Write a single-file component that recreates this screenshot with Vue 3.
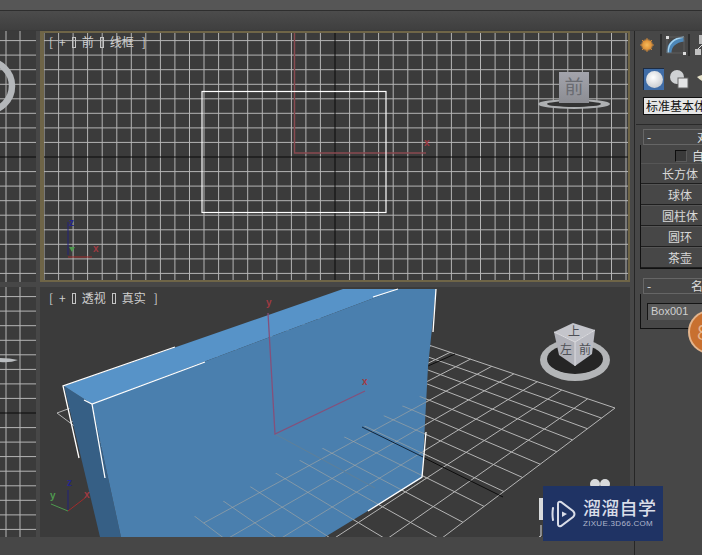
<script setup>
const step = 14.55

// lines of an orthographic grid around a centre point
const gridLines = (center, from, to) => {
  const out = []
  const first = Math.ceil((from - center) / step)
  const last = Math.floor((to - center) / step)
  for (let i = first; i <= last; i++) {
    if (i !== 0) out.push(+(center + i * step).toFixed(1))
  }
  return out
}

const frontXs = gridLines(335, 44, 630)
const frontYs = gridLines(157, 34, 281)
const sideXs = [6, 20]
const sideTopYs = gridLines(157, 34, 281)
const sideBottomYs = gridLines(413, 289, 537)

// floor grid of the perspective view: unit square mapped on a quad
const quad = [[331, 312], [615, 408], [333, 620], [57, 413]]
const project = (u, v) => {
  const [[x0, y0], [x1, y1], [x2, y2], [x3, y3]] = quad
  const dx = x0 - x1 + x2 - x3
  const dy = y0 - y1 + y2 - y3
  const dx1 = x1 - x2
  const dx2 = x3 - x2
  const dy1 = y1 - y2
  const dy2 = y3 - y2
  const den = dx1 * dy2 - dx2 * dy1
  const g = (dx * dy2 - dx2 * dy) / den
  const h = (dx1 * dy - dx * dy1) / den
  const w = g * u + h * v + 1
  return [
    (((x1 - x0 + g * x1) * u + (x3 - x0 + h * x3) * v + x0) / w).toFixed(1),
    (((y1 - y0 + g * y1) * u + (y3 - y0 + h * y3) * v + y0) / w).toFixed(1),
  ]
}

const floor = []
const cells = 14
for (let i = 0; i <= cells; i++) {
  const t = i / cells
  const a = project(t, 0)
  const b = project(t, 1)
  const c = project(0, t)
  const d = project(1, t)
  floor.push(`M${a[0]} ${a[1]}L${b[0]} ${b[1]}`)
  floor.push(`M${c[0]} ${c[1]}L${d[0]} ${d[1]}`)
}
const floorPath = floor.join('')

const shapes = ['长方体', '球体', '圆柱体', '圆环', '茶壶']
</script>

<template>
  <div class="app">
    <div class="menu-bar"></div>
    <div class="tool-bar"></div>
    <div class="workspace">
      <div class="viewports">
        <div class="viewport">
          <svg class="canvas" viewBox="0 31 36 251">
            <g class="grid">
              <path v-for="x in sideXs" :key="x" :d="`M${x} 31V282`" />
              <path v-for="y in sideTopYs" :key="y" :d="`M0 ${y}H36`" />
            </g>
            <path class="center-line" d="M0 157H36" />
            <circle cx="-13" cy="86" r="25" fill="none" stroke="#b4b7ba" stroke-width="6.500" />
          </svg>
        </div>

        <div class="viewport front">
          <svg class="canvas" viewBox="40 31 590 251">
            <defs>
              <linearGradient id="cube-face" x1="0" y1="0" x2="0" y2="1">
                <stop offset="0" stop-color="#a3a4ac" />
                <stop offset="1" stop-color="#8c8d93" />
              </linearGradient>
            </defs>
            <g class="grid">
              <path v-for="x in frontXs" :key="x" :d="`M${x} 31V282`" />
              <path v-for="y in frontYs" :key="y" :d="`M41 ${y}H631`" />
            </g>
            <path class="center-line" d="M41 157H631M335 31V282" />
            <path d="M294.500 31V153H426" fill="none" stroke="#8a4a50" stroke-width="1.400" />
            <text x="424" y="146" class="axis-label red">x</text>
            <rect x="202" y="91.500" width="184" height="121" fill="none" stroke="#fff" stroke-width="1.200" />
            <path d="M68 255V222" stroke="#22227a" fill="none" />
            <path d="M68 257H92" stroke="#a02c2c" fill="none" />
            <text x="69" y="226" class="axis-label blue">z</text>
            <text x="93" y="252" class="axis-label red">x</text>
            <path d="M69 247l3 5l3-5z" fill="#4f9a4f" />
            <!-- view cube -->
            <ellipse cx="574" cy="104" rx="36" ry="5" fill="#aeb0b2" />
            <ellipse cx="574" cy="104" rx="27" ry="3" fill="#333" />
            <rect x="559" y="72" width="30" height="31" fill="url(#cube-face)" />
            <text x="574" y="94" class="cube-text">前</text>
          </svg>
          <span class="vp-label"><b>[</b><b>+</b><i class="tofu"></i><b>前</b><i class="tofu"></i><b>线框</b><b class="close">]</b></span>
        </div>

        <div class="viewport">
          <svg class="canvas" viewBox="0 287 36 250">
            <g class="grid">
              <path v-for="x in sideXs" :key="x" :d="`M${x} 287V537`" />
              <path v-for="y in sideBottomYs" :key="y" :d="`M0 ${y}H36`" />
            </g>
            <path class="center-line" d="M0 413H36" />
            <path d="M0 358Q10 358 18 360Q10 363 0 362z" fill="#b9bcbf" />
          </svg>
        </div>

        <div class="viewport persp">
          <svg class="canvas" viewBox="40 287 590 250">
            <defs>
              <clipPath id="on-box">
                <path d="M150 540L430 391L430 478L325 537z" />
              </clipPath>
            </defs>
            <path :d="floorPath" class="floor" />
            <path d="M362 427L503 497M428 366L455 354" stroke="#0c0c0c" fill="none" />
            <!-- box -->
            <path d="M64 386L92 404L121 537H100z" fill="#365f85" />
            <path d="M64 386L343 289H398L92 404z" fill="#5793c8" />
            <path d="M92 404L398 289H436L428 367L422 478L325 537H121z" fill="#4a7fae" />
            <path :d="floorPath" class="floor on-box" clip-path="url(#on-box)" />
            <path d="M275 434L375 488" stroke="#5f7f99" fill="none" />
            <path d="M362 427L423 457" stroke="#10243a" fill="none" />
            <path
              d="M175 347L63 386L79 458M84 400L92 404L205 362M92 404L105 478M373 297L398 289M436 289L433 332M426 432L422 477L368 511"
              fill="none"
              stroke="#fff"
              stroke-width="1.300"
            />
            <!-- pivot -->
            <path d="M268 313L275 434L365 391" fill="none" stroke="#85507a" stroke-width="1.300" />
            <text x="266" y="306" class="axis-label red">y</text>
            <text x="362" y="385" class="axis-label red">x</text>
            <!-- tripod -->
            <path d="M68 511V490" stroke="#22227a" fill="none" />
            <path d="M68 511L85 498" stroke="#a02c2c" fill="none" />
            <path d="M68 511L51 504" stroke="#4f9a4f" fill="none" />
            <text x="67" y="486" class="axis-label blue">z</text>
            <text x="84" y="498" class="axis-label red">x</text>
            <text x="50" y="499" class="axis-label green">y</text>
            <!-- view cube -->
            <ellipse cx="575" cy="360" rx="35" ry="21" fill="#b3b5b7" />
            <ellipse cx="575" cy="359" rx="28" ry="15" fill="#252525" />
            <path d="M573 323L595 330L575 342L554 332z" fill="#c4c5cb" />
            <path d="M554 332L575 342V366L559 355z" fill="#b0b1b8" />
            <path d="M595 330L592 354L575 366V342z" fill="#babbc2" />
            <path d="M554 332L575 342L595 330M575 342V366" fill="none" stroke="#dcdce0" />
            <text x="566" y="354" class="cube-text small">左</text>
            <text x="585" y="354" class="cube-text small">前</text>
            <text x="574" y="336" class="cube-text small">上</text>
            <!-- object behind the logo -->
            <circle cx="595" cy="484" r="5" fill="#d8dadc" />
            <circle cx="605" cy="484" r="5" fill="#d8dadc" />
            <rect x="539" y="498" width="4" height="22" fill="#d8dadc" />
            <path d="M541 525V536L539 537" stroke="#d8dadc" fill="none" />
          </svg>
          <span class="vp-label"><b>[</b><b>+</b><i class="tofu"></i><b>透视</b><i class="tofu"></i><b>真实</b><b class="close">]</b></span>
        </div>
      </div>

      <aside class="panel">
        <div class="tabs">
          <svg width="20" height="20" viewBox="0 0 20 20">
            <defs>
              <radialGradient id="sun-glow">
                <stop offset="0" stop-color="#f7bb5b" />
                <stop offset="0.65" stop-color="#e2953a" />
                <stop offset="1" stop-color="#e2953a" stop-opacity="0" />
              </radialGradient>
            </defs>
            <g stroke="#c9843a" stroke-width="1">
              <path d="M10 3V17M3 10H17M5 5L15 15M15 5L5 15" />
            </g>
            <circle cx="10" cy="10" r="6.500" fill="url(#sun-glow)" />
          </svg>
          <svg width="30" height="22" viewBox="0 0 30 22">
            <path d="M1 0V22M29 0V22" stroke="#141414" />
            <path d="M9 19Q9 7 24 5" fill="none" stroke="#4d87b8" stroke-width="5" />
            <path d="M8 19Q8 5 24 3" fill="none" stroke="#a6d3ef" stroke-width="1.500" />
            <path d="M7 3H24V19H7z" fill="none" stroke="#5e5e5e" />
            <rect x="6" y="2" width="3" height="3" fill="#ddd" />
            <rect x="23" y="18" width="3" height="3" fill="#ddd" />
          </svg>
          <svg width="14" height="22" viewBox="0 0 14 22">
            <rect x="6" y="1" width="8" height="9" fill="#b9b9b9" />
            <rect x="2" y="15" width="6" height="6" fill="#c2c2c2" />
            <path d="M5 15L11 9" stroke="#ddd" />
          </svg>
        </div>
        <div class="tabs types">
          <span class="sphere-btn"><i class="sphere"></i></span>
          <svg width="20" height="20" viewBox="0 0 20 20">
            <circle cx="8" cy="8" r="7" fill="#cfd1d3" />
            <rect x="9" y="9" width="10" height="10" fill="#e4e5e6" stroke="#666" />
          </svg>
          <svg width="16" height="14" viewBox="0 0 16 14">
            <path d="M0 5Q8 1 16 3V13Q7 12 0 5z" fill="#e3dfc6" />
          </svg>
        </div>
        <div class="dropdown">标准基本体</div>

        <div class="rollouts">
          <div class="rollout">
            <div class="rollout-head"><span class="minus">-</span><span class="title">对象类型</span></div>
            <div class="rollout-body">
              <label class="check"><i class="box"></i>自动栅格</label>
              <button v-for="s in shapes" :key="s" class="shape">{{ s }}</button>
            </div>
          </div>
          <div class="rollout second">
            <div class="rollout-head"><span class="minus">-</span><span class="title">名称和颜色</span></div>
            <div class="rollout-body name">
              <div class="name-input">Box001</div>
            </div>
          </div>
          <span class="orange-badge">8</span>
        </div>
      </aside>
    </div>

    <div class="logo">
      <svg width="25" height="28" viewBox="0 0 25 28">
        <path d="M2 8Q1 14 2 20" fill="none" stroke="#d9dde8" stroke-width="2" stroke-linecap="round" />
        <path d="M7 4Q7 1 10 2L22 11Q25 14 22 17L10 26Q7 27 7 24z" fill="none" stroke="#d9dde8" stroke-width="2" />
        <path d="M11 11.500L16 14L11 17z" fill="#d9dde8" />
      </svg>
      <div class="logo-text">
        <strong>溜溜自学</strong>
        <small>ZIXUE.3D66.COM</small>
      </div>
    </div>
  </div>
</template>

<style scoped>
.app {
  position: relative;
  width: 702px;
  height: 555px;
  overflow: hidden;
  background: #474747;
  font-family: "Noto Sans CJK SC", "Liberation Sans", sans-serif;
}

.menu-bar {
  height: 10px;
  background: #565656;
  border-bottom: 1px solid #2e2e2e;
}

.tool-bar {
  height: 19px;
  background: linear-gradient(#4c4c4c, #3f3f3f);
}

.workspace {
  display: flex;
  height: 525px;
  border-top: 1px solid #3a3a3a;
}

.viewports {
  display: grid;
  grid-template-columns: 36px 590px;
  grid-template-rows: 251px 250px;
  column-gap: 4px;
  row-gap: 5px;
  width: 634px;
  flex: none;
}

.viewport {
  position: relative;
  background: #3b3b3b;
  overflow: hidden;
}

.front::after {
  content: "";
  position: absolute;
  inset: 0;
  border: solid #6f6547;
  border-width: 2px 2px 2px 4px;
}

.canvas {
  display: block;
  width: 100%;
  height: 100%;
}

.grid path {
  stroke: #b6b6b6;
  stroke-width: 1;
  fill: none;
}

.center-line {
  stroke: #0a0a0a;
  fill: none;
}

.floor {
  fill: none;
  stroke: #b5b5b5;
  stroke-width: 1;
}

.on-box {
  stroke: #a9a9a4;
  opacity: 0.6;
}

.axis-label {
  font-family: "Liberation Sans", sans-serif;
  font-size: 10px;
  font-weight: 700;
}

.red {
  fill: #a03a42;
}

.blue {
  fill: #25258a;
}

.green {
  fill: #4f9a4f;
}

.cube-text {
  font-family: "Noto Sans CJK SC", sans-serif;
  font-size: 19px;
  text-anchor: middle;
  fill: #6a6c72;
}

.cube-text.small {
  font-size: 12px;
  fill: #4e5056;
}

.vp-label {
  position: absolute;
  left: 9px;
  top: 3px;
  display: flex;
  align-items: center;
  gap: 6px;
  height: 16px;
  font-size: 12px;
  line-height: 16px;
  color: #cfcfcf;
  white-space: nowrap;
}

.vp-label b {
  font-weight: 400;
}

.vp-label .close {
  margin-left: 2px;
}

.tofu {
  width: 2px;
  height: 9px;
  border: 1px solid #c4c4c4;
}

.panel {
  flex: 1;
  min-width: 0;
  overflow: hidden;
  border-left: 1px solid #262626;
  padding-left: 1px;
}

.tabs {
  display: flex;
  align-items: center;
  gap: 3px;
  width: 90px;
  height: 24px;
  padding: 2px 0 0 1px;
}

.types {
  gap: 5px;
  height: 22px;
  padding: 11px 0 0 7px;
}

.sphere-btn {
  display: flex;
  align-items: center;
  justify-content: center;
  flex: none;
  width: 21px;
  height: 22px;
  background: #3f6ca6;
  box-sizing: border-box;
  border-top: 1px solid #1c2c44;
  border-left: 1px solid #1c2c44;
}

.sphere {
  width: 17px;
  height: 17px;
  border-radius: 50%;
  background: radial-gradient(circle at 42% 38%, #fff, #b8bcc2);
}

.types svg {
  flex: none;
}

.types svg:last-child {
  margin-left: 3px;
}

.dropdown {
  width: 90px;
  height: 18px;
  margin: 7px 0 0 7px;
  padding-left: 2px;
  background: #e6e6e6;
  border: 1px solid #111;
  box-sizing: border-box;
  color: #111;
  font-size: 12px;
  line-height: 16px;
  white-space: nowrap;
}

.rollouts {
  position: relative;
  width: 170px;
  margin-top: 9px;
  border-top: 1px solid #2a2a2a;
  padding: 4px 0 0 4px;
}

.rollout-head {
  position: relative;
  box-sizing: border-box;
  width: 156px;
  height: 16px;
  margin-left: 3px;
  border: 1px solid #666;
  color: #ddd;
  font-size: 12px;
  line-height: 14px;
  text-align: center;
}

.minus {
  position: absolute;
  left: 3px;
}

.rollout-body {
  display: flex;
  flex-direction: column;
  align-items: flex-start;
  width: 160px;
  border-left: 1px solid #111;
  border-bottom: 1px solid #111;
  padding: 3px 0 0;
}

.check {
  display: flex;
  align-items: center;
  gap: 5px;
  height: 15px;
  margin-left: 34px;
  color: #ddd;
  font-size: 12px;
  white-space: nowrap;
}

.box {
  box-sizing: border-box;
  width: 12px;
  height: 12px;
  background: #3a3a3a;
  border-top: 1px solid #0d0d0d;
  border-left: 1px solid #0d0d0d;
  border-right: 1px solid #5b5b5b;
  border-bottom: 1px solid #5b5b5b;
}

.shape {
  width: 78px;
  height: 21px;
  padding: 0;
  background: #474747;
  border: 0;
  border-bottom: 1px solid #1e1e1e;
  border-top: 1px solid #565656;
  color: #d8d8d8;
  font-family: inherit;
  font-size: 12px;
  line-height: 18px;
}

.second {
  margin-top: 9px;
}

.name {
  padding: 9px 0 8px 6px;
}

.name-input {
  box-sizing: border-box;
  width: 80px;
  height: 17px;
  padding-left: 3px;
  background: #5a5a5a;
  border-top: 1px solid #151515;
  border-left: 1px solid #151515;
  color: #cfcfcf;
  font-family: "Liberation Sans", sans-serif;
  font-size: 11px;
  line-height: 15px;
}

.orange-badge {
  position: absolute;
  left: 52px;
  top: 185px;
  box-sizing: border-box;
  width: 44px;
  height: 44px;
  border: 2px solid #e3b48c;
  border-radius: 50%;
  background: #c8702f;
  color: #e8b48a;
  font-size: 20px;
  line-height: 40px;
  padding-left: 7px;
}

.logo {
  position: absolute;
  left: 543px;
  top: 486px;
  display: flex;
  align-items: center;
  gap: 7px;
  width: 120px;
  height: 55px;
  box-sizing: border-box;
  padding-left: 8px;
  background: #1f3364;
  color: #d9dde8;
}

.logo-text {
  display: flex;
  flex-direction: column;
  margin-top: -2px;
}

.logo-text strong {
  font-size: 18px;
  font-weight: 500;
  line-height: 21px;
  letter-spacing: 0.3px;
  white-space: nowrap;
}

.logo-text small {
  font-family: "Liberation Sans", sans-serif;
  font-size: 8px;
  line-height: 11px;
  letter-spacing: 0.3px;
  color: #aeb6cc;
  white-space: nowrap;
}
</style>
